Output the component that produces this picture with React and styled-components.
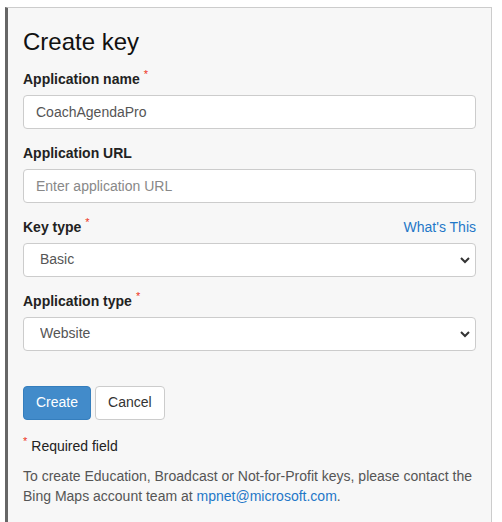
import React from "react";
import styled, { createGlobalStyle } from "styled-components";

const Global = createGlobalStyle`
  body {
    margin: 0;
    background: #fff;
    font-family: "Liberation Sans", Arial, sans-serif;
    font-size: 14px;
    line-height: 1.42857;
    color: #333;
  }
  * { box-sizing: border-box; }
`;

const Panel = styled.section`
  margin: 7px 10px 0 5px;
  padding: 0 15px 10px 15px;
  background: #f7f7f7;
  border: 1px solid #ccc;
  border-left: 3px solid #666;
`;

const Title = styled.h3`
  margin: 21px 0 15px;
  font-size: 24px;
  font-weight: 400;
  line-height: 1.1;
  color: #111;
`;

const Group = styled.div`
  margin-bottom: 15px;
`;

const LabelRow = styled.div`
  display: flex;
  justify-content: space-between;
  align-items: baseline;
  height: 20px;
  margin-bottom: 5px;
`;

const Label = styled.label`
  font-weight: 700;
  color: #222;
`;

const Star = styled.span`
  position: relative;
  top: -6px;
  margin: ${(p) => (p.$lead ? "0 4px 0 0" : "0 0 0 4px")};
  font-size: 11px;
  font-weight: 400;
  line-height: 0;
  color: #e32;
`;

const Link = styled.a`
  color: #1f78c8;
  text-decoration: none;
`;

const Input = styled.input`
  display: block;
  width: 100%;
  height: 34px;
  padding: 6px 12px;
  font: inherit;
  color: #555;
  background: #fff;
  border: 1px solid #ccc;
  border-radius: 4px;
  &::placeholder { color: #888; }
`;

const SelectWrap = styled.div`
  position: relative;
`;

const Select = styled.select`
  display: block;
  width: 100%;
  height: 34px;
  padding: 6px 30px 6px 16px;
  font: inherit;
  color: #555;
  background: #fff;
  border: 1px solid #ccc;
  border-radius: 4px;
  appearance: none;
`;

const Chevron = styled.svg`
  position: absolute;
  right: 6px;
  top: 13px;
  pointer-events: none;
`;

const Actions = styled.div`
  display: flex;
  gap: 4px;
  margin-top: 35px;
  margin-bottom: 17px;
`;

const Button = styled.button`
  height: 34px;
  padding: 6px 12px;
  font: inherit;
  border-radius: 4px;
  border: 1px solid ${(p) => (p.$primary ? "#357ebd" : "#ccc")};
  background: ${(p) => (p.$primary ? "#428bca" : "#fff")};
  color: ${(p) => (p.$primary ? "#fff" : "#333")};
`;

const Note = styled.p`
  margin: 0 0 10px;
  color: ${(p) => (p.$muted ? "#555" : "#222")};
`;

function Arrow() {
  return (
    <Chevron width="10" height="8" viewBox="0 0 10 8">
      <path d="M1 2 L5 6 L9 2" fill="none" stroke="#333" strokeWidth="2" />
    </Chevron>
  );
}

function SelectField({ value, options }) {
  return (
    <SelectWrap>
      <Select defaultValue={value}>
        {options.map((o) => (
          <option key={o}>{o}</option>
        ))}
      </Select>
      <Arrow />
    </SelectWrap>
  );
}

export default function App() {
  return (
    <>
      <Global />
      <Panel>
        <Title>Create key</Title>
        <Group>
          <LabelRow>
            <Label>
              Application name<Star>*</Star>
            </Label>
          </LabelRow>
          <Input defaultValue="CoachAgendaPro" />
        </Group>
        <Group>
          <LabelRow>
            <Label>Application URL</Label>
          </LabelRow>
          <Input placeholder="Enter application URL" />
        </Group>
        <Group>
          <LabelRow>
            <Label>
              Key type<Star>*</Star>
            </Label>
            <Link href="#">What's This</Link>
          </LabelRow>
          <SelectField value="Basic" options={["Basic", "Enterprise"]} />
        </Group>
        <Group>
          <LabelRow>
            <Label>
              Application type<Star>*</Star>
            </Label>
          </LabelRow>
          <SelectField value="Website" options={["Website", "Mobile", "Other"]} />
        </Group>
        <Actions>
          <Button $primary>Create</Button>
          <Button>Cancel</Button>
        </Actions>
        <Note>
          <Star $lead>*</Star>Required field
        </Note>
        <Note $muted>
          To create Education, Broadcast or Not-for-Profit keys, please contact the
          Bing Maps account team at <Link href="#">mpnet@microsoft.com</Link>.
        </Note>
      </Panel>
    </>
  );
}
